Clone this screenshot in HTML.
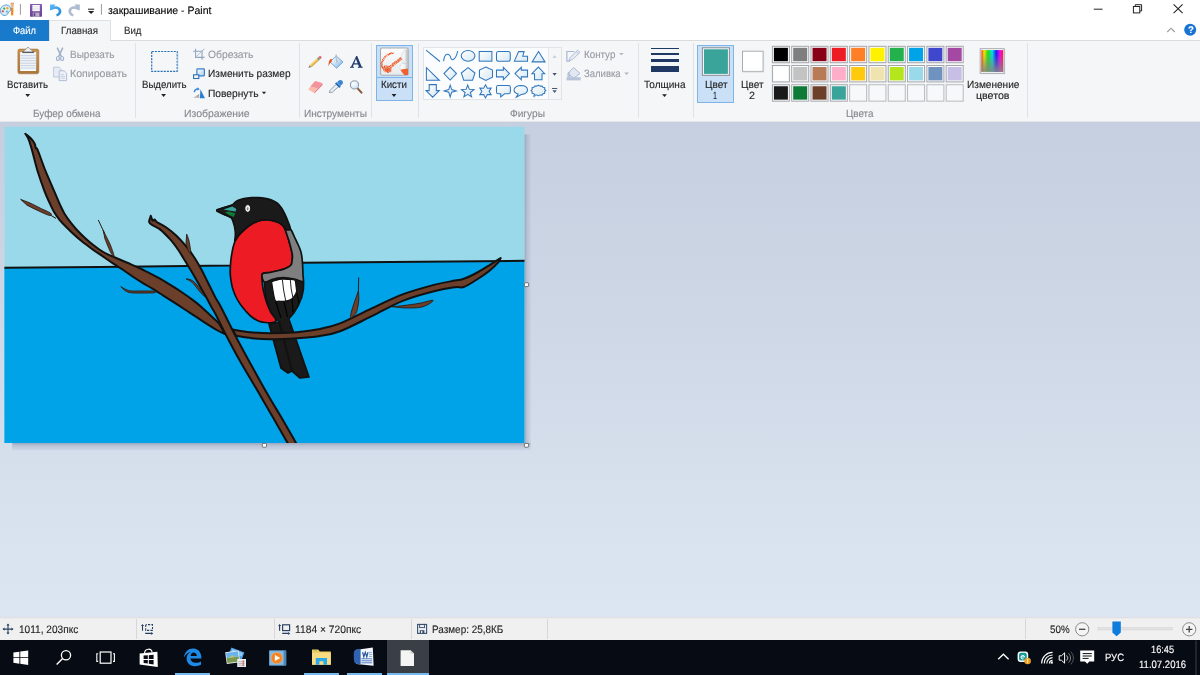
<!DOCTYPE html>
<html><head><meta charset="utf-8"><title>Paint</title>
<style>
html,body{margin:0;padding:0}
body{width:1200px;height:675px;position:relative;overflow:hidden;background:#fff;font-family:"Liberation Sans",sans-serif}
.t{position:absolute;white-space:nowrap;line-height:1;transform-origin:0 0;display:block;text-rendering:geometricPrecision;-webkit-text-stroke:.12px currentColor}
svg{overflow:visible}
</style></head><body>
<div style="position:absolute;left:0px;top:122px;width:1200px;height:496px;background:linear-gradient(#c5cfdf 0%,#ccd6e5 35%,#d7e0ed 75%,#dce5f2 100%)"></div>
<div style="position:absolute;left:0px;top:0px;width:1200px;height:41px;background:#fff"></div>
<div style="position:absolute;left:0px;top:40px;width:1200px;height:82px;background:#f5f6f7;border-top:1px solid #dadbdc;box-sizing:border-box"></div>
<div style="position:absolute;left:0px;top:121px;width:1200px;height:1px;background:#e3e5e8"></div>
<div style="position:absolute;left:0px;top:20px;width:49px;height:21px;background:#1979ca"></div>
<span class="t" style="left:13.00px;top:26px;font-size:10.5px;color:#fff;transform:scaleX(0.8889);">Файл</span>
<div style="position:absolute;left:49px;top:20px;width:62px;height:21px;background:#f5f6f7;border:1px solid #dfe0e2;border-bottom:none;box-sizing:border-box"></div>
<span class="t" style="left:61.00px;top:26px;font-size:10.5px;color:#2b2b2b;transform:scaleX(0.9250);">Главная</span>
<span class="t" style="left:124.00px;top:26px;font-size:10.5px;color:#2b2b2b;transform:scaleX(0.9211);">Вид</span>
<span class="t" style="left:108.00px;top:6px;font-size:10.8px;color:#000;transform:scaleX(0.9740);">закрашивание - Paint</span>
<div style="position:absolute;left:135px;top:43px;width:1px;height:75px;background:#e0e2e5"></div>
<div style="position:absolute;left:299px;top:43px;width:1px;height:75px;background:#e0e2e5"></div>
<div style="position:absolute;left:371px;top:43px;width:1px;height:75px;background:#e0e2e5"></div>
<div style="position:absolute;left:418px;top:43px;width:1px;height:75px;background:#e0e2e5"></div>
<div style="position:absolute;left:638px;top:43px;width:1px;height:75px;background:#e0e2e5"></div>
<div style="position:absolute;left:693px;top:43px;width:1px;height:75px;background:#e0e2e5"></div>
<div style="position:absolute;left:1027px;top:43px;width:1px;height:75px;background:#e0e2e5"></div>
<span class="t" style="left:7.00px;top:80px;font-size:10.5px;color:#1e1e1e;transform:scaleX(0.9213);">Вставить</span>
<span class="t" style="left:70.00px;top:50px;font-size:10.5px;color:#969aa2;transform:scaleX(0.9519);">Вырезать</span>
<span class="t" style="left:70.00px;top:69px;font-size:10.5px;color:#969aa2;transform:scaleX(1.0088);">Копировать</span>
<span class="t" style="left:33.00px;top:109px;font-size:10.5px;color:#85888e;transform:scaleX(0.9457);">Буфер обмена</span>
<span class="t" style="left:142.00px;top:80px;font-size:10.5px;color:#1e1e1e;transform:scaleX(0.9175);">Выделить</span>
<span class="t" style="left:208.00px;top:50px;font-size:10.5px;color:#969aa2;transform:scaleX(0.9811);">Обрезать</span>
<span class="t" style="left:208.00px;top:69px;font-size:10.5px;color:#1e1e1e;transform:scaleX(0.9649);">Изменить размер</span>
<span class="t" style="left:208.00px;top:89px;font-size:10.5px;color:#1e1e1e;transform:scaleX(0.9735);">Повернуть</span>
<span class="t" style="left:183.80px;top:109px;font-size:10.5px;color:#85888e;transform:scaleX(0.9921);">Изображение</span>
<span class="t" style="left:304.00px;top:109px;font-size:10.5px;color:#85888e;transform:scaleX(0.9618);">Инструменты</span>
<div style="position:absolute;left:376px;top:45px;width:37px;height:56px;background:#c9e0f7;border:1px solid #7eb4ea;box-sizing:border-box"></div>
<div style="position:absolute;left:377px;top:76.7px;width:35px;height:1px;background:#7eb4ea"></div>
<span class="t" style="left:380.60px;top:80px;font-size:10.5px;color:#1e1e1e;transform:scaleX(0.9256);">Кисти</span>
<div style="position:absolute;left:423px;top:47px;width:139px;height:53px;background:#fbfcfd;border:1px solid #e1e3e6;box-sizing:border-box"></div>
<div style="position:absolute;left:548px;top:48px;width:13px;height:51px;background:#f5f6f7;border-left:1px solid #e6e8ea;box-sizing:border-box"></div>
<span class="t" style="left:583.70px;top:50px;font-size:10.5px;color:#969aa2;transform:scaleX(0.9309);">Контур</span>
<span class="t" style="left:583.70px;top:69px;font-size:10.5px;color:#969aa2;transform:scaleX(0.9062);">Заливка</span>
<span class="t" style="left:510.00px;top:109px;font-size:10.5px;color:#85888e;transform:scaleX(0.9655);">Фигуры</span>
<span class="t" style="left:644.00px;top:80px;font-size:10.5px;color:#1e1e1e;transform:scaleX(0.9540);">Толщина</span>
<div style="position:absolute;left:651px;top:48.2px;width:28px;height:1px;background:#1f3864"></div>
<div style="position:absolute;left:651px;top:52.5px;width:28px;height:2.1px;background:#1f3864"></div>
<div style="position:absolute;left:651px;top:58.9px;width:28px;height:3.5px;background:#1f3864"></div>
<div style="position:absolute;left:651px;top:65.9px;width:28px;height:5.8px;background:#1f3864"></div>
<div style="position:absolute;left:697px;top:45px;width:37px;height:58px;background:#c9e0f7;border:1px solid #7eb4ea;box-sizing:border-box"></div>
<span class="t" style="left:704.50px;top:80px;font-size:10.5px;color:#1e1e1e;transform:scaleX(0.9574);">Цвет</span>
<span class="t" style="left:713.00px;top:91px;font-size:10.5px;color:#1e1e1e;transform:scaleX(0.6809);">1</span>
<span class="t" style="left:741.00px;top:80px;font-size:10.5px;color:#1e1e1e;transform:scaleX(0.9574);">Цвет</span>
<span class="t" style="left:749.00px;top:91px;font-size:10.5px;color:#1e1e1e;transform:scaleX(1.0213);">2</span>
<svg style="position:absolute;left:0px;top:0px;" width="1200" height="675" viewBox="0 0 1200 675"><rect x="772.40" y="46.30" width="17" height="16.4" fill="#fbfbfc" stroke="#a3a6ab" stroke-width="1"/><rect x="773.90" y="47.80" width="14" height="13.4" fill="#000000"/><rect x="791.71" y="46.30" width="17" height="16.4" fill="#fbfbfc" stroke="#a3a6ab" stroke-width="1"/><rect x="793.21" y="47.80" width="14" height="13.4" fill="#7f7f7f"/><rect x="811.02" y="46.30" width="17" height="16.4" fill="#fbfbfc" stroke="#a3a6ab" stroke-width="1"/><rect x="812.52" y="47.80" width="14" height="13.4" fill="#880015"/><rect x="830.33" y="46.30" width="17" height="16.4" fill="#fbfbfc" stroke="#a3a6ab" stroke-width="1"/><rect x="831.83" y="47.80" width="14" height="13.4" fill="#ed1c24"/><rect x="849.64" y="46.30" width="17" height="16.4" fill="#fbfbfc" stroke="#a3a6ab" stroke-width="1"/><rect x="851.14" y="47.80" width="14" height="13.4" fill="#ff7f27"/><rect x="868.95" y="46.30" width="17" height="16.4" fill="#fbfbfc" stroke="#a3a6ab" stroke-width="1"/><rect x="870.45" y="47.80" width="14" height="13.4" fill="#fff200"/><rect x="888.26" y="46.30" width="17" height="16.4" fill="#fbfbfc" stroke="#a3a6ab" stroke-width="1"/><rect x="889.76" y="47.80" width="14" height="13.4" fill="#22b14c"/><rect x="907.57" y="46.30" width="17" height="16.4" fill="#fbfbfc" stroke="#a3a6ab" stroke-width="1"/><rect x="909.07" y="47.80" width="14" height="13.4" fill="#00a2e8"/><rect x="926.88" y="46.30" width="17" height="16.4" fill="#fbfbfc" stroke="#a3a6ab" stroke-width="1"/><rect x="928.38" y="47.80" width="14" height="13.4" fill="#3f48cc"/><rect x="946.19" y="46.30" width="17" height="16.4" fill="#fbfbfc" stroke="#a3a6ab" stroke-width="1"/><rect x="947.69" y="47.80" width="14" height="13.4" fill="#a349a4"/><rect x="772.40" y="65.50" width="17" height="16.4" fill="#fbfbfc" stroke="#a3a6ab" stroke-width="1"/><rect x="773.90" y="67.00" width="14" height="13.4" fill="#ffffff"/><rect x="791.71" y="65.50" width="17" height="16.4" fill="#fbfbfc" stroke="#a3a6ab" stroke-width="1"/><rect x="793.21" y="67.00" width="14" height="13.4" fill="#c3c3c3"/><rect x="811.02" y="65.50" width="17" height="16.4" fill="#fbfbfc" stroke="#a3a6ab" stroke-width="1"/><rect x="812.52" y="67.00" width="14" height="13.4" fill="#b97a57"/><rect x="830.33" y="65.50" width="17" height="16.4" fill="#fbfbfc" stroke="#a3a6ab" stroke-width="1"/><rect x="831.83" y="67.00" width="14" height="13.4" fill="#ffaec9"/><rect x="849.64" y="65.50" width="17" height="16.4" fill="#fbfbfc" stroke="#a3a6ab" stroke-width="1"/><rect x="851.14" y="67.00" width="14" height="13.4" fill="#ffc90e"/><rect x="868.95" y="65.50" width="17" height="16.4" fill="#fbfbfc" stroke="#a3a6ab" stroke-width="1"/><rect x="870.45" y="67.00" width="14" height="13.4" fill="#efe4b0"/><rect x="888.26" y="65.50" width="17" height="16.4" fill="#fbfbfc" stroke="#a3a6ab" stroke-width="1"/><rect x="889.76" y="67.00" width="14" height="13.4" fill="#b5e61d"/><rect x="907.57" y="65.50" width="17" height="16.4" fill="#fbfbfc" stroke="#a3a6ab" stroke-width="1"/><rect x="909.07" y="67.00" width="14" height="13.4" fill="#99d9ea"/><rect x="926.88" y="65.50" width="17" height="16.4" fill="#fbfbfc" stroke="#a3a6ab" stroke-width="1"/><rect x="928.38" y="67.00" width="14" height="13.4" fill="#7092be"/><rect x="946.19" y="65.50" width="17" height="16.4" fill="#fbfbfc" stroke="#a3a6ab" stroke-width="1"/><rect x="947.69" y="67.00" width="14" height="13.4" fill="#c8bfe7"/><rect x="772.40" y="84.75" width="17" height="16.4" fill="#fbfbfc" stroke="#a3a6ab" stroke-width="1"/><rect x="773.90" y="86.25" width="14" height="13.4" fill="#1a1a1a"/><rect x="791.71" y="84.75" width="17" height="16.4" fill="#fbfbfc" stroke="#a3a6ab" stroke-width="1"/><rect x="793.21" y="86.25" width="14" height="13.4" fill="#0f7a37"/><rect x="811.02" y="84.75" width="17" height="16.4" fill="#fbfbfc" stroke="#a3a6ab" stroke-width="1"/><rect x="812.52" y="86.25" width="14" height="13.4" fill="#6b3f2a"/><rect x="830.33" y="84.75" width="17" height="16.4" fill="#fbfbfc" stroke="#a3a6ab" stroke-width="1"/><rect x="831.83" y="86.25" width="14" height="13.4" fill="#3ba49a"/><rect x="849.64" y="84.75" width="17" height="16.4" fill="#f7f8f9" stroke="#b7babe" stroke-width="1"/><rect x="868.95" y="84.75" width="17" height="16.4" fill="#f7f8f9" stroke="#b7babe" stroke-width="1"/><rect x="888.26" y="84.75" width="17" height="16.4" fill="#f7f8f9" stroke="#b7babe" stroke-width="1"/><rect x="907.57" y="84.75" width="17" height="16.4" fill="#f7f8f9" stroke="#b7babe" stroke-width="1"/><rect x="926.88" y="84.75" width="17" height="16.4" fill="#f7f8f9" stroke="#b7babe" stroke-width="1"/><rect x="946.19" y="84.75" width="17" height="16.4" fill="#f7f8f9" stroke="#b7babe" stroke-width="1"/><rect x="702.4" y="47.75" width="27" height="27.6" fill="#eef4fb" stroke="#8c8f94" stroke-width="1"/><rect x="704" y="49.3" width="23.9" height="24.6" fill="#3ba49a"/><rect x="742.5" y="51.2" width="20.6" height="20.2" fill="#fff" stroke="#a9acb1" stroke-width="1"/><path d="M763.6,51.6 V71.9 H742.8" fill="none" stroke="#c3c6ca" stroke-width=".8"/></svg>
<svg style="position:absolute;left:0px;top:0px;" width="1200" height="675" viewBox="0 0 1200 675"><defs><linearGradient id="gHue" x1="0" y1="0" x2="1" y2="0"><stop offset="0" stop-color="#ff2a00"/><stop offset=".12" stop-color="#ffe600"/><stop offset=".3" stop-color="#18e018"/><stop offset=".5" stop-color="#00e0e0"/><stop offset=".68" stop-color="#1414ff"/><stop offset=".86" stop-color="#ff00e6"/><stop offset="1" stop-color="#ff1440"/></linearGradient><linearGradient id="gGray" x1="0" y1="0" x2="0" y2="1"><stop offset="0" stop-color="#808080" stop-opacity="0"/><stop offset=".25" stop-color="#808080" stop-opacity=".12"/><stop offset="1" stop-color="#858585" stop-opacity=".92"/></linearGradient></defs><rect x="980.6" y="49.2" width="24.6" height="25" fill="#9a9da2" opacity=".35"/><rect x="980.2" y="48.7" width="24" height="24.6" fill="#fdfdfd" stroke="#a6a9ae" stroke-width="1"/><rect x="981.4" y="50.1" width="21.8" height="21.7" fill="url(#gHue)"/><rect x="981.4" y="50.1" width="21.8" height="21.7" fill="url(#gGray)"/></svg>
<span class="t" style="left:967.00px;top:80px;font-size:10.5px;color:#1e1e1e;transform:scaleX(0.9611);">Изменение</span>
<span class="t" style="left:976.00px;top:91px;font-size:10.5px;color:#1e1e1e;transform:scaleX(1.0113);">цветов</span>
<span class="t" style="left:846.00px;top:109px;font-size:10.5px;color:#85888e;transform:scaleX(0.9402);">Цвета</span>
<svg style="position:absolute;left:0px;top:0px;" width="1200" height="675" viewBox="0 0 1200 675"><defs>
<linearGradient id="gBoard" x1="0" y1="0" x2="0" y2="1"><stop offset="0" stop-color="#c8924f"/><stop offset="1" stop-color="#a9763b"/></linearGradient>
<linearGradient id="gUndo" x1="0" y1="0" x2="1" y2="1"><stop offset="0" stop-color="#5db8f5"/><stop offset="1" stop-color="#1e86d8"/></linearGradient>
<linearGradient id="gShape" x1="0" y1="0" x2="1" y2="1"><stop offset="0" stop-color="#ffffff"/><stop offset="1" stop-color="#d6e8f3"/></linearGradient>
<linearGradient id="gRes" x1="0" y1="0" x2="1" y2="1"><stop offset="0" stop-color="#ffffff"/><stop offset="1" stop-color="#a9cdea"/></linearGradient>
<linearGradient id="gSave" x1="0" y1="0" x2="0" y2="1"><stop offset="0" stop-color="#8a5cb4"/><stop offset="1" stop-color="#6a3f95"/></linearGradient>
</defs><path d="M0.3,10.5 C0.3,7 3.5,5 6.5,5 C9.5,5 10.8,7.2 10.6,9.6 C10.4,12 8.6,11.6 8.2,13 C7.8,14.6 6,15.6 4,15.4 C1.6,15.1 0.3,13 0.3,10.5Z" fill="#d9ecf8" stroke="#5b9fd0" stroke-width="1"/><circle cx="4.2" cy="8.6" r="1.15" fill="#3bb24a"/><circle cx="7.4" cy="8.2" r="1.15" fill="#f4a01c"/><circle cx="2.8" cy="11.3" r="1.1" fill="#e04848"/><circle cx="7" cy="11.6" r="1.2" fill="#7db4e0"/><path d="M11,7.6 L13.4,7.6 L13.3,15.3 L11.9,15.6 L11.1,15.3Z" fill="#f08a1c"/><path d="M10.4,3.2 L14,3.2 L13.5,7.6 L11,7.6Z" fill="#e7b98a"/><rect x="10.8" y="2.6" width="3" height="1.2" fill="#c9a27a"/><rect x="19.9" y="4" width="1" height="10.8" fill="#9a9a9a"/><rect x="100.9" y="4" width="1" height="10.8" fill="#9a9a9a"/><rect x="30" y="4" width="12" height="12.7" rx="0.6" fill="url(#gSave)"/><rect x="32.4" y="5" width="7.4" height="6.2" fill="#fff"/><path d="M32.4,6.7h7.4M32.4,8.3h7.4M32.4,9.8h7.4" stroke="#c9c9d6" stroke-width=".5"/><rect x="32.8" y="12.6" width="6.6" height="4.1" fill="#b9b3c4"/><rect x="33.6" y="13.2" width="1.8" height="2.9" fill="#6a3f95"/><path d="M50,4.6 L55.6,4.6 L53.6,6.6 C57.6,5.4 61.6,8 61.4,11.6 C61.2,14.2 59.2,16 57,16.6 L56,14.4 C57.8,13.8 58.9,12.4 58.6,10.8 C58.2,8.8 56,8 53.7,9.2 L50,10.4Z" fill="url(#gUndo)"/><path d="M79.8,4.6 L74.2,4.6 L76.2,6.6 C72.2,5.4 68.2,8 68.4,11.6 C68.6,14.2 70.6,16 72.8,16.6 L73.8,14.4 C72,13.8 70.9,12.4 71.2,10.8 C71.6,8.8 73.8,8 76.1,9.2 L79.8,10.4Z" fill="#aebcd3"/><rect x="88" y="8.7" width="6.2" height="1" fill="#222"/><path d="M88,11 L94.2,11 L91.1,14Z" fill="#222"/><path d="M1093.8,9.2 H1102.6" stroke="#222" stroke-width="1"/><rect x="1133.4" y="6.5" width="6.4" height="6.4" fill="none" stroke="#222" stroke-width="1"/><path d="M1135.3,6.4 V4.7 H1141.6 V11 H1139.9" fill="none" stroke="#222" stroke-width="1"/><path d="M1173.6,4.4 L1182.6,13.2 M1182.6,4.4 L1173.6,13.2" stroke="#222" stroke-width="1.05"/><path d="M1167.3,32 L1171,28.2 L1174.8,32" fill="none" stroke="#9a9a9a" stroke-width="1.1"/><circle cx="1190.2" cy="29.8" r="6" fill="#1873d3"/><rect x="17.9" y="49.1" width="20.9" height="24.7" rx="1.8" fill="url(#gBoard)" stroke="#a27238" stroke-width=".6"/><rect x="20.2" y="52.1" width="15.9" height="18.9" fill="#fbfcfd"/><rect x="20.2" y="53.6" width="15.9" height="15.8" fill="#e6ecf2"/><path d="M20.2,55.6h15.9 M20.2,58.2h15.9 M20.2,60.7h15.9 M20.2,63.2h15.9 M20.2,65.7h15.9 M20.2,68.1h15.9" stroke="#c6d2de" stroke-width=".9"/><path d="M20.2,54.4h15.9 M20.2,56.9h15.9 M20.2,59.5h15.9 M20.2,62h15.9 M20.2,64.5h15.9 M20.2,66.9h15.9 M20.2,69.2h15.9" stroke="#f4f7fa" stroke-width=".7"/><path d="M22.6,52.6 L26.4,48.6 C27.2,47 29,47 29.8,48.6 L33.8,52.6Z" fill="#e9ebee" stroke="#70747a" stroke-width=".6"/><path d="M24.4,51.2 L31.8,51.2" stroke="#fff" stroke-width="1"/><rect x="22.4" y="51.6" width="11.6" height="1.4" fill="#5a5d62"/><path d="M25.3,94.1 L30.099999999999998,94.1 L27.7,96.89999999999999Z" fill="#222"/><path d="M57.2,47.6 L61.4,56.6 M62.8,47.6 L58.6,56.6" stroke="#9fb0cd" stroke-width="1.5" fill="none"/><ellipse cx="57.9" cy="58.5" rx="1.5" ry="2" fill="none" stroke="#9fb0cd" stroke-width="1.2"/><ellipse cx="62.1" cy="58.5" rx="1.5" ry="2" fill="none" stroke="#9fb0cd" stroke-width="1.2"/><path d="M53.6,67.2 h5.4 l2.2,2.2 v7.6 h-7.6Z" fill="#e8edf5" stroke="#b7c4da" stroke-width=".9"/><path d="M59.2,70.8 h5 l2.4,2.4 v7.4 h-7.4Z" fill="#eef2f8" stroke="#a9b9d3" stroke-width=".9"/><path d="M60.6,74.6h3.6M60.6,76.4h4.4M60.6,78.2h4.4" stroke="#b7c4da" stroke-width=".7"/><rect x="151.7" y="51.5" width="25.5" height="19.8" fill="none" stroke="#2a72b8" stroke-width="1.2" stroke-dasharray="2.1 1.05"/><path d="M177.9,52 V71.6" stroke="#a9c6e4" stroke-width=".6"/><path d="M161.2,94.1 L166.0,94.1 L163.6,96.89999999999999Z" fill="#222"/><path d="M195.6,48.8 V57.4 H204.6 M193.2,51.2 H202 V59.8" fill="none" stroke="#93a3c2" stroke-width="1.1"/><path d="M196.6,56.4 L201,52.2" stroke="#b3c0d6" stroke-width="1"/><path d="M202,51.2 L204.4,48.8" stroke="#93a3c2" stroke-width="1"/><rect x="196.9" y="68.9" width="7.5" height="6.9" rx=".7" fill="url(#gRes)" stroke="#3a80c6" stroke-width="1.2"/><rect x="193.6" y="74.8" width="5.2" height="3.7" fill="#f8fafc" stroke="#2b6fb8" stroke-width="1.1"/><defs><linearGradient id="gRotG" x1="0" y1="1" x2="1" y2="0"><stop offset="0" stop-color="#d9dadc"/><stop offset="1" stop-color="#8d9095"/></linearGradient></defs><path d="M192.8,98.1 L199.2,98.1 L199.2,93.9Z" fill="url(#gRotG)"/><path d="M199.9,98.2 L205,98.2 L200.4,89.2Z" fill="#2b7fd0"/><path d="M194.2,92.2 C194.6,90 196.2,88.8 198,88.9" fill="none" stroke="#2f86e0" stroke-width="1.4"/><path d="M197.4,87.3 L199.8,89.3 L197.2,90.6Z" fill="#2f86e0"/><path d="M261.9,91.8 L266.1,91.8 L264,94.2Z" fill="#222"/></svg>
<span class="t" style="left:1187.60px;top:26px;font-size:9.5px;color:#fff;transform:scaleX(1.0095);font-weight:bold">?</span>
<svg style="position:absolute;left:0px;top:0px;" width="1200" height="675" viewBox="0 0 1200 675"><defs>
<linearGradient id="gBucket" x1="0" y1="0" x2="1" y2="1"><stop offset="0" stop-color="#ffffff"/><stop offset=".45" stop-color="#d4e6f7"/><stop offset="1" stop-color="#6fa8e0"/></linearGradient>
<linearGradient id="gEr" x1="0" y1="0" x2="0" y2="1"><stop offset="0" stop-color="#f7a3a3"/><stop offset="1" stop-color="#ee8080"/></linearGradient>
<linearGradient id="gBrBox" x1="0" y1="0" x2="0" y2="1"><stop offset="0" stop-color="#fdfdfd"/><stop offset="1" stop-color="#e6ebee"/></linearGradient>
<radialGradient id="gLens" cx=".4" cy=".35" r=".7"><stop offset="0" stop-color="#ffffff"/><stop offset="1" stop-color="#c3def5"/></radialGradient>
</defs><g transform="translate(308.4,68.1) rotate(-42.4)"><path d="M0,0 L3,-1.4 L3,1.4Z" fill="#8a8378"/><rect x="3" y="-1.4" width="10" height="2.8" fill="#ecc05a"/><rect x="3" y="-1.4" width="10" height="0.9" fill="#f6dc92"/><rect x="3" y=".6" width="10" height=".8" fill="#d1a040"/><rect x="13" y="-1.4" width="1.3" height="2.8" fill="#4f9a66"/><rect x="14.3" y="-1.4" width="2.9" height="2.8" rx=".7" fill="#de6f7c"/></g><path d="M336.2,56 L343,62 L336.6,68.2 L330,62Z" fill="url(#gBucket)" stroke="#6aa3dc" stroke-width=".9"/><path d="M336.2,54.6 L336.8,62.4" stroke="#9aa3ad" stroke-width="1.3"/><path d="M336.2,54.6 L336.8,62.4" stroke="#e4e8ec" stroke-width=".5"/><path d="M331.8,58.8 C329.6,59 328.4,61.4 328.6,66.2 C329.4,64.6 330.2,62.6 331.8,61.6Z" fill="#f0501e"/><path d="M356.2,56 L357.2,56 L361.6,66.4 L362.8,67 L362.8,67.8 L357.8,67.8 L357.8,67 L358.9,66.6 L358.1,64.5 L353.7,64.5 L352.9,66.6 L354,67 L354,67.8 L350,67.8 L350,67 L351.2,66.4Z M354.3,63.2 L357.6,63.2 L355.9,58.8Z" fill="#1f3b6b" fill-rule="evenodd"/><path d="M315.2,81.1 L322.3,82.9 L317.6,88.4 L310.2,86.5Z" fill="#f4939b"/><path d="M310.2,86.5 L317.6,88.4 L313.9,92.7 L308.4,89.8Z" fill="#fbbcae"/><path d="M322.3,82.9 L322.6,85.1 L314.9,92.9 L313.9,92.7 L317.6,88.4Z" fill="#e9808a"/><path d="M329.4,92.6 L330,90.4 L336.2,84.2 L338.6,86.6 L332.4,92.2Z" fill="#e8eef4" stroke="#6d7d90" stroke-width=".7"/><path d="M335,83.6 L339.4,88 L340.8,86.6 L336.4,82.2Z" fill="#2468b4"/><path d="M337.2,82.6 C338,80.4 340.6,79.2 342.2,80.8 C343.8,82.4 342.6,85 340.4,85.8Z" fill="#3a86d6"/><path d="M357.8,88.6 L361.5,92.7" stroke="#8a5a3a" stroke-width="2" stroke-linecap="round"/><circle cx="354.5" cy="84.9" r="4.1" fill="url(#gLens)" stroke="#8c97a4" stroke-width="1"/><defs><filter id="grain" x="-10%" y="-10%" width="120%" height="120%"><feTurbulence type="fractalNoise" baseFrequency="1.1" numOctaves="2" seed="7" result="n"/><feColorMatrix in="n" type="matrix" values="0 0 0 0 0  0 0 0 0 0  0 0 0 0 0  3.2 0 0 0 -1.05" result="m"/><feComposite in="SourceGraphic" in2="m" operator="in"/></filter><linearGradient id="gBody" x1="0" y1="0" x2="1" y2="0"><stop offset="0" stop-color="#ffffff"/><stop offset=".55" stop-color="#f2f3f4"/><stop offset="1" stop-color="#b4b8bd"/></linearGradient></defs><rect x="380.5" y="48" width="27.8" height="27.3" rx="1.8" fill="url(#gBrBox)" stroke="#a9adb2" stroke-width="1.1"/><g opacity=".38"><path d="M392.8,53 C388.6,53.8 384.2,56.8 382.4,61 C381.2,63.6 381.4,66 382.6,67.8" fill="none" stroke="#f08050" stroke-width="1.2" stroke-linecap="round"/><ellipse cx="387.2" cy="69" rx="4.4" ry="3.3" fill="#f07040" transform="rotate(25 387.2 69)"/><path d="M388.6,68.6 C392,65.4 396,62 400.8,58.8" fill="none" stroke="#f07040" stroke-width="2.4" stroke-linecap="round"/></g><g filter="url(#grain)"><path d="M392.8,53 C388.6,53.8 384.2,56.8 382.4,61 C381.2,63.6 381.4,66 382.6,67.8" fill="none" stroke="#ee5a28" stroke-width="2" stroke-linecap="round"/><ellipse cx="387.2" cy="69" rx="4.8" ry="3.7" fill="#ee5424" transform="rotate(25 387.2 69)"/><path d="M388.6,68.6 C392,65.4 396,62 400.8,58.8" fill="none" stroke="#ee5a28" stroke-width="3" stroke-linecap="round"/></g><ellipse cx="387.6" cy="69.4" rx="2.6" ry="2" fill="#ee5a28" opacity=".75"/><path d="M402.2,53.2 C402.6,50.8 405.4,49.4 408,49.6 L408,74.9 L404,74.9 C402.6,73 400.4,70.6 400,68.4 C399.6,66.2 400.8,64.6 402.4,63.4 C403.6,62.4 403.4,60.6 402.4,59.4 C401.2,57.8 401.6,55.2 402.2,53.2Z" fill="url(#gBody)" stroke="#c2c6ca" stroke-width=".5"/><path d="M402.6,63.4 C404.4,63 406,63.4 408,64.6" fill="none" stroke="#c9cdd1" stroke-width=".8"/><path d="M400.6,69.8 C403.6,69 406,68.8 408,68.8 L408,74.9 L404.2,74.9 C402.8,73.2 401.2,71.6 400.6,69.8Z" fill="#f0602e"/><path d="M391.6,94.1 L396.4,94.1 L394,96.89999999999999Z" fill="#222"/><path d="M426.04,50.04 L439.94,61.52" fill="none" stroke="#3077bd" stroke-width="1.05" stroke-linejoin="miter"/><path d="M443.56,61.16 C444.77,51.25 449.60,53.67 450.81,57.90 S456.25,58.50 457.70,51.01" fill="none" stroke="#3077bd" stroke-width="1.05"/><ellipse cx="468.09" cy="55.84" rx="6.89" ry="5.32" fill="url(#gShape)" stroke="#3077bd" stroke-width="1.05"/><rect x="479.21" y="51.49" width="12.69" height="9.67" fill="url(#gShape)" stroke="#3077bd" stroke-width="1.05"/><rect x="496.49" y="51.49" width="13.77" height="9.67" rx="2" fill="url(#gShape)" stroke="#3077bd" stroke-width="1.05"/><path d="M514.37,61.16 L518.60,51.61 L524.16,51.61 L522.71,56.20 L527.54,56.20 L527.54,61.16Z" fill="url(#gShape)" stroke="#3077bd" stroke-width="1.05" stroke-linejoin="miter"/><path d="M538.54,51.49 L545.06,61.88 L532.13,61.88Z" fill="url(#gShape)" stroke="#3077bd" stroke-width="1.05" stroke-linejoin="miter"/><path d="M426.40,67.68 L426.40,80.25 L439.33,80.25Z" fill="url(#gShape)" stroke="#3077bd" stroke-width="1.05" stroke-linejoin="miter"/><path d="M450.21,67.08 L456.49,73.60 L450.21,80.01 L443.92,73.60Z" fill="url(#gShape)" stroke="#3077bd" stroke-width="1.05" stroke-linejoin="miter"/><path d="M468.09,67.68 L474.98,73.00 L472.56,80.25 L463.74,80.25 L461.32,73.00Z" fill="url(#gShape)" stroke="#3077bd" stroke-width="1.05" stroke-linejoin="miter"/><path d="M485.85,67.08 L492.50,70.10 L492.50,77.23 L485.85,80.49 L479.45,77.23 L479.45,70.10Z" fill="url(#gShape)" stroke="#3077bd" stroke-width="1.05" stroke-linejoin="miter"/><path d="M496.49,70.10 L503.37,70.10 L503.37,67.32 L509.42,73.60 L503.37,79.77 L503.37,76.87 L496.49,76.87Z" fill="url(#gShape)" stroke="#3077bd" stroke-width="1.05" stroke-linejoin="miter"/><path d="M527.54,70.10 L521.26,70.10 L521.26,67.32 L514.97,73.60 L521.26,79.77 L521.26,76.87 L527.54,76.87Z" fill="url(#gShape)" stroke="#3077bd" stroke-width="1.05" stroke-linejoin="miter"/><path d="M538.41,67.08 L544.70,73.72 L542.04,73.72 L542.04,79.65 L534.55,79.65 L534.55,73.72 L531.89,73.72Z" fill="url(#gShape)" stroke="#3077bd" stroke-width="1.05" stroke-linejoin="miter"/><path d="M429.18,84.60 L436.31,84.60 L436.31,90.64 L439.33,90.64 L432.69,97.17 L426.04,90.64 L429.18,90.64Z" fill="url(#gShape)" stroke="#3077bd" stroke-width="1.05" stroke-linejoin="miter"/><path d="M450.21,85.08 L451.66,89.55 L456.25,90.88 L451.66,92.21 L450.21,96.92 L448.76,92.21 L444.17,90.88 L448.76,89.55Z" fill="url(#gShape)" stroke="#3077bd" stroke-width="1.05" stroke-linejoin="miter"/><path d="M467.73,85.08 L469.36,89.36 L473.93,89.59 L470.37,92.47 L471.56,96.89 L467.73,94.39 L463.89,96.89 L465.09,92.47 L461.52,89.59 L466.09,89.36Z" fill="url(#gShape)" stroke="#3077bd" stroke-width="1.05" stroke-linejoin="miter"/><path d="M485.49,84.84 L487.30,88.23 L491.14,88.10 L489.12,91.37 L491.14,94.63 L487.30,94.51 L485.49,97.89 L483.68,94.51 L479.84,94.63 L481.87,91.37 L479.84,88.10 L483.68,88.23Z" fill="url(#gShape)" stroke="#3077bd" stroke-width="1.05" stroke-linejoin="miter"/><path d="M498.30,85.45 H508.45 Q510.38,85.45 510.38,87.26 V91.97 Q510.38,93.78 508.45,93.78 H504.58 L500.72,96.92 L500.72,93.78 H498.30 Q496.49,93.78 496.49,91.97 V87.26 Q496.49,85.45 498.30,85.45Z" fill="url(#gShape)" stroke="#3077bd" stroke-width="1.05"/><path d="M518.12,94.02 C511.83,92.33 513.04,85.69 520.89,85.45 C529.35,85.45 529.96,94.14 521.26,94.51 L516.30,97.17Z" fill="url(#gShape)" stroke="#3077bd" stroke-width="1.05"/><path d="M545.86,90.52 L544.56,91.70 L544.86,93.18 L542.91,93.73 L542.14,95.12 L540.06,94.91 L538.41,95.84 L536.77,94.91 L534.69,95.12 L533.92,93.73 L531.97,93.18 L532.27,91.70 L530.97,90.52 L532.27,89.34 L531.97,87.86 L533.92,87.31 L534.69,85.92 L536.77,86.13 L538.41,85.20 L540.06,86.13 L542.14,85.92 L542.91,87.31 L544.86,87.86 L544.56,89.34 L545.86,90.52Z" fill="url(#gShape)" stroke="#3077bd" stroke-width="1.05" stroke-linejoin="round"/><circle cx="534.19" cy="96.20" r=".8" fill="none" stroke="#3077bd" stroke-width=".7"/><path d="M552.43,57.77 L556.78,57.77 L554.61,55.36Z" fill="#c5cad3"/><path d="M552.43,73.00 L556.78,73.00 L554.61,75.66Z" fill="#4a5670"/><rect x="551.95" y="87.98" width="5.32" height="1" fill="#4a5670"/><path d="M552.43,90.28 L556.78,90.28 L554.61,92.94Z" fill="#4a5670"/><path d="M574.4,51.5 H566.9 V61.2 H570" fill="none" stroke="#a9b8d2" stroke-width="1.2"/><path d="M568.9,60.6 L570.2,57.4 L577.6,50.2 L580,52.4 L572.4,59.6Z" fill="#e6ebf4" stroke="#a9b8d2" stroke-width=".9"/><path d="M576.2,51.6 L578.6,53.8" stroke="#a9b8d2" stroke-width=".8"/><path d="M573.6,67.6 L580,73.4 L574,78 L567.6,73.6Z" fill="#e3e9f2" stroke="#a9b8d2" stroke-width="1"/><rect x="566.6" y="77.2" width="14" height="3.2" fill="#b6c3d9"/><path d="M567.4,77.2 C567,74.6 568.2,72.4 569.8,71.6 L570.6,77.2Z" fill="#b6c3d9"/><path d="M619.1,52.9 L623.6999999999999,52.9 L621.4,55.3Z" fill="#b0b3b9"/><path d="M624.3000000000001,72.5 L628.9,72.5 L626.6,74.9Z" fill="#b0b3b9"/><path d="M662.1,94.3 L666.9,94.3 L664.5,97.1Z" fill="#222"/></svg>
<svg style="position:absolute;left:0px;top:0px;" width="1200" height="675" viewBox="0 0 1200 675"><defs><linearGradient id="shR" x1="0" y1="0" x2="1" y2="0"><stop offset="0" stop-color="#95a0b8" stop-opacity=".9"/><stop offset=".5" stop-color="#a8b2c8" stop-opacity=".5"/><stop offset="1" stop-color="#b4bed2" stop-opacity=".3"/></linearGradient><linearGradient id="shB" x1="0" y1="0" x2="0" y2="1"><stop offset="0" stop-color="#95a0b8" stop-opacity=".9"/><stop offset=".5" stop-color="#a8b2c8" stop-opacity=".5"/><stop offset="1" stop-color="#b4bed2" stop-opacity=".3"/></linearGradient></defs><rect x="524.5" y="134.29999999999998" width="6.2" height="308.59999999999997" fill="url(#shR)"/><rect x="12.2" y="442.9" width="512.3000000000001" height="7.2" fill="url(#shB)"/><defs><radialGradient id="shC" cx="0" cy="0" r="1"><stop offset="0" stop-color="#95a0b8" stop-opacity=".9"/><stop offset=".5" stop-color="#a8b2c8" stop-opacity=".5"/><stop offset="1" stop-color="#b4bed2" stop-opacity=".3"/></radialGradient></defs><rect x="524.5" y="442.9" width="6.2" height="7.2" fill="url(#shB)" opacity=".8"/><defs><filter id="bl" x="-5%" y="-5%" width="110%" height="110%"><feGaussianBlur stdDeviation="2.2"/></filter><clipPath id="cv"><rect x="4.4" y="126.6" width="520.1" height="316.29999999999995"/></clipPath></defs><g clip-path="url(#cv)"><rect x="4.4" y="126.6" width="520.1" height="316.29999999999995" fill="#99d9ea"/><path d="M0,267.8 L100,266.9 L231,265.4 L262,264.2 L302,262.8 L420,261.7 L530,260.8 L530,450 L0,450Z" fill="#00a2e8" stroke="#111" stroke-width="2"/><path d="M25.3,133.7 C25.9,134.7 27.5,136.7 28.7,139.7 C29.9,142.7 30.9,146.4 32.4,151.7 C33.9,157.0 35.8,165.3 37.8,171.7 C39.8,178.1 42.3,185.2 44.2,190.3 C46.1,195.4 47.5,198.3 49.2,202.0 C50.9,205.7 52.6,209.5 54.4,212.6 C56.2,215.7 58.0,217.9 60.0,220.4 C62.0,222.9 63.9,224.7 66.7,227.5 C69.5,230.3 73.7,234.3 76.7,237.0 C79.8,239.7 82.2,241.5 85.0,243.7 C87.8,245.9 90.2,247.8 93.3,250.0 C96.3,252.2 100.0,254.4 103.3,256.7 C106.6,259.0 110.0,261.5 113.3,263.7 C116.6,265.9 120.0,267.8 123.3,270.0 C126.6,272.2 130.0,274.8 133.3,277.0 C136.6,279.2 140.0,281.3 143.3,283.3 C146.6,285.3 150.0,287.1 153.3,289.2 C156.6,291.2 159.4,293.1 163.3,295.6 C167.2,298.1 172.2,301.3 176.7,304.2 C181.1,307.1 185.6,309.9 190.0,312.8 C194.4,315.7 198.9,318.7 203.3,321.6 C207.8,324.5 213.1,327.9 216.7,330.0 C220.3,332.1 223.4,333.3 224.7,334.0 L224.7,334.0 C223.8,332.3 221.1,326.6 219.3,324.0 C217.5,321.4 216.7,321.2 214.0,318.7 C211.3,316.1 206.8,311.8 203.3,308.7 C199.9,305.6 197.2,303.3 193.3,300.4 C189.4,297.4 183.9,293.6 180.0,291.0 C176.1,288.4 173.3,286.8 170.0,284.7 C166.7,282.6 163.9,280.8 160.0,278.6 C156.1,276.4 150.3,273.6 146.7,271.7 C143.1,269.8 141.6,269.0 138.3,267.5 C135.0,266.0 130.6,264.2 126.7,262.5 C122.8,260.8 118.9,259.2 115.0,257.5 C111.1,255.8 106.9,254.1 103.3,252.0 C99.7,249.9 96.3,247.3 93.3,245.0 C90.2,242.7 87.8,240.6 85.0,238.0 C82.2,235.4 79.2,232.4 76.7,229.7 C74.2,227.0 72.0,224.2 70.0,221.7 C68.0,219.2 66.7,217.4 65.0,214.6 C63.3,211.8 61.6,208.0 60.0,204.6 C58.4,201.2 58.0,199.8 55.6,194.3 C53.2,188.8 48.8,179.0 45.8,171.7 C42.8,164.4 39.5,154.2 37.8,150.3 C36.1,146.4 36.3,149.1 35.8,148.0 C35.3,146.9 35.5,145.1 34.6,143.5 C33.8,141.9 32.2,139.9 30.7,138.3 C29.1,136.7 26.2,134.5 25.3,133.7Z" fill="#6b3f2a" stroke="#111" stroke-width="2" stroke-linejoin="round"/><path d="M279.0,321.0 L292.0,371.0 L300.0,378.0 L309.0,377.0 L288.5,318.0Z" fill="#1a1a1a" stroke="#111" stroke-width="1.7" stroke-linejoin="round"/><path d="M269.0,324.0 L281.0,368.0 L288.0,373.0 L292.0,371.0 L279.0,322.0Z" fill="#1a1a1a" stroke="#111" stroke-width="1.7" stroke-linejoin="round"/><path d="M232.5,329.6 C235.4,330.0 243.8,331.6 250.0,332.2 C256.2,332.8 262.2,333.3 270.0,333.3 C277.8,333.3 288.7,332.9 297.0,332.2 C305.3,331.5 312.8,330.5 320.0,329.0 C327.2,327.5 331.4,326.8 340.0,323.4 C348.6,319.9 361.1,313.2 371.7,308.3 C382.2,303.4 392.8,298.1 403.3,294.1 C413.9,290.2 426.4,286.9 435.0,284.6 C443.6,282.4 450.4,281.5 455.0,280.6 C459.6,279.7 459.2,280.3 462.5,279.2 C465.8,278.1 470.0,276.4 474.6,274.0 C479.2,271.6 486.0,267.3 490.4,264.6 C494.8,261.9 499.0,259.1 500.7,258.0 L500.7,258.0 C500.2,258.8 499.8,260.6 497.8,262.8 C495.8,265.0 492.4,268.4 488.8,271.3 C485.2,274.2 480.4,277.4 476.2,280.0 C472.0,282.6 467.3,285.8 463.8,287.0 C460.3,288.2 459.8,286.5 455.0,287.2 C450.2,287.9 443.6,288.8 435.0,291.0 C426.4,293.2 413.9,296.4 403.3,300.6 C392.8,304.8 382.2,311.1 371.7,316.2 C361.1,321.3 348.6,328.0 340.0,331.3 C331.4,334.6 327.2,334.9 320.0,336.0 C312.8,337.1 305.3,337.7 297.0,338.2 C288.7,338.7 277.5,339.2 270.0,339.2 C262.5,339.2 257.7,338.8 252.0,338.2 C246.3,337.6 238.7,336.2 236.0,335.8Z" fill="#6b3f2a" stroke="#111" stroke-width="2" stroke-linejoin="round"/><path d="M150.8,215.8 C150.5,216.9 148.7,220.6 149.2,222.3 C149.7,224.0 152.2,224.8 154.0,226.0 C155.8,227.2 157.3,227.2 160.0,229.4 C162.7,231.6 166.9,235.8 170.0,239.2 C173.1,242.6 175.8,246.4 178.3,250.0 C180.8,253.6 182.8,257.2 185.0,260.8 C187.2,264.4 189.5,267.9 191.7,271.7 C193.9,275.4 196.1,279.4 198.3,283.3 C200.5,287.2 202.8,291.1 205.0,295.0 C207.2,298.9 209.5,303.4 211.3,306.7 C213.1,310.0 213.6,310.3 216.0,315.0 C218.4,319.7 222.0,327.3 226.0,335.0 C230.0,342.7 234.3,351.0 240.0,361.0 C245.7,371.0 254.4,385.4 260.0,395.0 C265.6,404.6 269.0,410.5 273.6,418.5 C278.2,426.5 284.6,437.8 287.6,443.0 C290.6,448.2 290.9,448.8 291.6,450.0 L300.0,450.0 C299.3,448.8 299.0,448.2 296.0,443.0 C293.0,437.8 286.7,426.5 282.0,418.5 C277.3,410.5 273.5,404.6 268.0,395.0 C262.5,385.4 254.5,371.0 249.0,361.0 C243.5,351.0 239.0,342.7 235.0,335.0 C231.0,327.3 227.6,320.2 225.0,315.0 C222.4,309.8 221.0,307.1 219.3,304.0 C217.6,300.9 216.8,300.1 215.0,296.7 C213.2,293.2 210.5,287.8 208.3,283.3 C206.1,278.9 203.9,274.1 201.7,270.0 C199.5,265.9 197.5,262.4 195.0,258.5 C192.5,254.7 189.8,250.7 186.7,246.9 C183.6,243.2 180.0,239.2 176.7,236.0 C173.4,232.8 170.0,230.0 166.7,227.7 C163.4,225.4 158.8,223.4 156.8,222.0 C154.8,220.6 155.3,219.6 154.6,219.4 C153.9,219.2 153.2,221.2 152.6,220.6 C152.0,220.0 151.1,216.6 150.8,215.8Z" fill="#6b3f2a" stroke="#111" stroke-width="2" stroke-linejoin="round"/><path d="M48,213.6 L56,218.4" stroke="#1a1210" stroke-width="1"/><path d="M20.7,199.4 C22.2,200.0 26.8,201.6 30.0,203.0 C33.2,204.4 36.5,206.3 40.0,208.0 C43.5,209.7 49.2,212.1 50.7,213.3 C52.2,214.5 51.1,215.8 49.0,215.3 C46.9,214.9 41.7,212.3 38.0,210.6 C34.3,208.9 28.8,206.1 27.0,205.2Z" fill="#6b3f2a" stroke="#2a1a12" stroke-width="0.9" stroke-linejoin="round"/><path d="M98.3,220 L104.4,233" stroke="#2a1a12" stroke-width="1"/><path d="M103.2,230.4 C103.8,231.7 105.7,235.4 107.0,238.0 C108.3,240.6 109.6,242.9 110.8,246.0 C112.0,249.1 114.1,255.1 114.2,256.4 C114.3,257.6 112.3,255.2 111.3,253.5 C110.3,251.8 109.0,248.9 108.0,246.5 C107.0,244.1 105.5,240.2 105.0,239.0Z" fill="#6b3f2a" stroke="#2a1a12" stroke-width="0.9" stroke-linejoin="round"/><path d="M186.7,234.2 C187.1,235.3 188.3,237.8 189.0,241.0 C189.7,244.2 191.0,251.8 190.8,253.3 C190.6,254.8 188.8,251.7 188.0,250.0 C187.2,248.3 186.3,244.2 186.0,243.0Z" fill="#6b3f2a" stroke="#2a1a12" stroke-width="0.9" stroke-linejoin="round"/><path d="M186.0,278.7 C187.1,279.1 190.5,279.2 192.7,280.8 C194.9,282.4 197.3,285.4 199.3,288.0 C201.3,290.6 204.7,296.2 204.7,296.7 C204.7,297.2 201.2,293.1 199.3,291.0 C197.4,288.9 195.1,285.5 193.5,283.8 C191.9,282.1 190.2,281.1 189.5,280.6Z" fill="#6b3f2a" stroke="#2a1a12" stroke-width="0.9" stroke-linejoin="round"/><path d="M120.8,286.7 C121.7,287.2 124.2,288.8 126.0,289.5 C127.8,290.2 128.9,290.8 131.7,291.0 C134.5,291.2 139.1,291.0 143.0,291.0 C146.9,291.0 153.2,290.9 155.0,291.2 C156.8,291.5 156.2,292.5 154.0,292.8 C151.8,293.1 145.8,293.0 142.0,293.0 C138.2,293.0 133.8,293.1 131.0,292.8 C128.2,292.5 126.4,291.3 125.5,291.0Z" fill="#6b3f2a" stroke="#2a1a12" stroke-width="0.9" stroke-linejoin="round"/><path d="M358.7,277.5 L358.3,294" stroke="#2a1a12" stroke-width="1"/><path d="M358.4,291.0 C358.5,292.3 358.9,296.3 358.8,299.0 C358.7,301.7 358.3,304.7 357.8,307.0 C357.3,309.3 357.2,311.1 356.0,313.0 C354.8,314.9 351.3,318.5 350.6,318.2 C349.9,317.9 351.0,313.5 351.6,311.0 C352.2,308.5 353.4,305.5 354.2,303.0 C355.0,300.5 356.2,297.2 356.6,296.0Z" fill="#6b3f2a" stroke="#2a1a12" stroke-width="0.9" stroke-linejoin="round"/><path d="M392.0,306.7 C394.0,306.5 399.4,306.1 404.0,305.5 C408.6,304.9 414.5,304.2 419.3,303.3 C424.1,302.4 431.4,300.1 432.9,300.3 C434.3,300.5 430.3,303.3 428.0,304.5 C425.7,305.7 423.1,306.9 419.3,307.5 C415.5,308.1 407.4,307.9 405.0,308.0Z" fill="#6b3f2a" stroke="#2a1a12" stroke-width="0.9" stroke-linejoin="round"/><path d="M264.5,281.0 L265.4,297.0 L268.5,306.0 L272.5,313.0 L278.0,318.5 L283.2,320.3 L289.0,318.5 L293.8,313.0 L298.5,305.0 L301.8,297.0 L303.4,289.0 L303.6,281.0 L295.0,279.0 L283.0,277.5 L272.0,279.0Z" fill="#1a1a1a" stroke="#111" stroke-width="1.7" stroke-linejoin="round"/><path d="M268,305 L276,321 L290,321 L284,300Z" fill="#1a1a1a"/><path d="M275.5,301 L281,318 M284,301.5 L287.5,317 M292,298.5 L293,312 M296.5,292 L299,303" stroke="#000" stroke-width="1.1" fill="none"/><path d="M235.0,241.0 C235.7,240.0 237.3,237.0 239.0,235.0 C240.7,233.0 243.0,230.8 245.0,229.0 C247.0,227.2 248.8,225.8 251.0,224.5 C253.2,223.2 256.0,221.8 258.3,221.0 C260.6,220.2 262.8,219.9 265.0,219.8 C267.2,219.7 269.5,219.9 271.7,220.3 C273.9,220.7 276.2,221.5 278.0,222.3 C279.8,223.1 281.1,223.9 282.3,225.0 C283.5,226.1 283.9,226.3 285.0,229.0 C286.1,231.7 287.8,236.8 289.0,241.0 C290.2,245.2 291.8,251.0 292.3,254.3 C292.8,257.6 292.2,259.2 292.0,261.0 C291.8,262.8 292.0,263.8 291.0,265.0 C290.0,266.2 287.9,267.4 286.0,268.3 C284.1,269.2 282.4,269.6 279.7,270.3 C277.0,271.0 272.9,271.9 270.0,272.5 C267.1,273.1 263.5,271.7 262.3,274.0 C261.1,276.3 262.3,282.8 262.7,286.3 C263.1,289.8 263.8,292.1 264.5,295.0 C265.2,297.9 266.1,301.1 267.2,304.0 C268.3,306.9 269.5,309.8 271.0,312.5 C272.5,315.2 275.8,318.3 276.0,320.0 C276.2,321.7 274.3,322.3 272.5,322.7 C270.7,323.1 267.4,322.8 265.0,322.5 C262.6,322.2 260.6,321.9 258.3,321.0 C256.1,320.1 253.6,318.4 251.5,316.8 C249.4,315.2 247.7,313.2 245.9,311.2 C244.1,309.1 242.2,306.9 240.5,304.5 C238.8,302.1 237.2,299.5 236.0,297.0 C234.8,294.5 233.8,291.9 233.0,289.5 C232.2,287.1 231.8,285.2 231.4,282.8 C231.0,280.4 230.5,277.5 230.3,275.0 C230.1,272.5 230.2,270.0 230.3,267.7 C230.4,265.4 230.6,263.2 230.8,261.0 C231.0,258.8 231.3,256.6 231.7,254.3 C232.1,252.1 232.8,248.6 233.0,247.5Z" fill="#ed1c24" stroke="#111" stroke-width="1.7" stroke-linejoin="round"/><path d="M285.0,229.0 C285.9,229.0 288.7,227.7 290.3,229.0 C291.9,230.3 293.2,234.3 294.5,237.0 C295.8,239.7 297.3,242.8 298.3,245.0 C299.3,247.2 299.9,248.7 300.5,250.5 C301.1,252.3 301.3,253.3 301.7,255.7 C302.1,258.1 302.4,261.8 302.6,265.0 C302.8,268.2 302.9,272.2 303.0,275.0 C303.1,277.8 304.1,280.8 302.9,281.5 C301.7,282.2 297.9,279.9 295.6,279.4 C293.3,278.8 291.1,278.5 289.0,278.2 C286.9,277.9 285.1,277.6 283.2,277.6 C281.3,277.6 279.3,277.9 277.5,278.2 C275.7,278.5 274.7,278.8 272.5,279.4 C270.3,280.0 266.0,282.9 264.3,282.0 C262.6,281.1 261.4,275.6 262.3,274.0 C263.2,272.4 267.1,273.1 270.0,272.5 C272.9,271.9 277.0,271.0 279.7,270.3 C282.4,269.6 284.1,269.2 286.0,268.3 C287.9,267.4 290.0,266.2 291.0,265.0 C292.0,263.8 291.8,262.8 292.0,261.0 C292.2,259.2 292.8,257.6 292.3,254.3 C291.8,251.0 289.6,243.2 289.0,241.0Z" fill="#7f7f7f" stroke="#111" stroke-width="1.7" stroke-linejoin="round"/><path d="M217.0,209.7 C218.2,209.3 221.4,208.4 224.0,207.6 C226.6,206.8 230.5,205.9 232.3,205.0 C234.1,204.1 234.0,203.2 235.0,202.4 C236.0,201.6 236.8,200.9 238.3,200.3 C239.8,199.7 241.8,199.0 244.0,198.6 C246.2,198.2 249.3,197.9 251.7,197.7 C254.1,197.5 256.3,197.5 258.5,197.6 C260.7,197.7 262.8,197.9 265.0,198.3 C267.2,198.7 269.5,199.2 271.5,200.0 C273.5,200.8 275.3,201.7 277.0,203.0 C278.7,204.3 280.2,206.1 281.5,208.0 C282.8,209.9 283.9,212.1 285.0,214.3 C286.1,216.6 287.1,219.1 288.0,221.5 C288.9,223.9 290.6,227.7 290.3,229.0 C290.0,230.3 287.3,230.2 286.0,229.5 C284.7,228.8 283.6,226.2 282.3,225.0 C281.0,223.8 279.8,223.1 278.0,222.3 C276.2,221.5 273.9,220.7 271.7,220.3 C269.5,219.9 267.2,219.7 265.0,219.8 C262.8,219.9 260.6,220.2 258.3,221.0 C256.0,221.8 253.2,223.2 251.0,224.5 C248.8,225.8 247.0,227.2 245.0,229.0 C243.0,230.8 240.7,233.0 239.0,235.0 C237.3,237.0 235.6,241.0 235.0,241.0 C234.4,241.0 235.4,237.0 235.4,235.0 C235.4,233.0 235.3,231.0 235.0,229.0 C234.7,227.0 234.2,224.9 233.5,223.0 C232.8,221.1 232.6,219.1 231.0,217.7 C229.4,216.3 226.3,215.6 224.0,214.5 C221.7,213.4 218.2,211.6 217.0,211.0Z" fill="#1a1a1a" stroke="#111" stroke-width="1.7" stroke-linejoin="round"/><path d="M271.6,281.9 C272.3,281.6 274.4,280.8 276.0,280.3 C277.6,279.9 279.4,279.4 281.4,279.2 C283.4,279.0 285.8,279.2 288.0,279.4 C290.2,279.5 293.4,279.0 294.7,280.1 C296.0,281.2 295.7,284.1 296.0,286.0 C296.3,287.9 296.7,290.0 296.5,291.6 C296.3,293.2 295.4,294.4 294.6,295.6 C293.9,296.8 293.1,298.0 292.0,298.8 C290.9,299.6 289.5,300.2 288.0,300.6 C286.5,301.0 284.7,301.3 283.2,301.4 C281.7,301.5 280.3,301.3 279.0,301.2 C277.7,301.1 276.2,302.2 275.2,300.5 C274.2,298.8 273.4,292.6 273.0,291.0Z" fill="#fff" stroke="#111" stroke-width="1.2"/><path d="M282.3,279.2 L283.6,290 L285.8,301.4 M290.3,279.6 L291.2,289 L292.9,297.5" stroke="#222" stroke-width="1" fill="none"/><path d="M223.5,209.6 L232.3,206.6 L236.3,209 L235.6,211.6 L229,210.4Z" fill="#3ba49a"/><path d="M225,212.3 L229,211.4 L235.4,213.2 L233.7,217 L229,215Z" fill="#0f7a37"/><path d="M232.3,205 L217,209.7 L217,211 L231,217.7" fill="none" stroke="#111" stroke-width="1.4"/><ellipse cx="247.7" cy="208.4" rx="1.9" ry="3" fill="#ddd" stroke="#fff" stroke-width="1"/><ellipse cx="247.6" cy="208.8" rx="0.8" ry="1.6" fill="#888"/></g></svg>
<svg style="position:absolute;left:0px;top:0px;" width="1200" height="675" viewBox="0 0 1200 675"><rect x="524.40" y="282.80" width="4.2" height="3.8" rx=".6" fill="#fff" stroke="#66686c" stroke-width=".9"/><rect x="524.40" y="443.40" width="4.2" height="3.8" rx=".6" fill="#fff" stroke="#66686c" stroke-width=".9"/><rect x="262.30" y="443.40" width="4.2" height="3.8" rx=".6" fill="#fff" stroke="#66686c" stroke-width=".9"/></svg>
<div style="position:absolute;left:0px;top:617px;width:1200px;height:23px;background:#f0f0f0"></div>
<svg style="position:absolute;left:0px;top:0px;" width="1200" height="675" viewBox="0 0 1200 675"><rect x="0" y="617.3" width="1200" height="0.9" fill="#d6d6d6"/><rect x="0" y="616.8" width="1200" height="0.55" fill="#dfe6f2"/></svg>
<div style="position:absolute;left:136px;top:619px;width:1px;height:20px;background:#d7d7d7"></div>
<div style="position:absolute;left:274px;top:619px;width:1px;height:20px;background:#d7d7d7"></div>
<div style="position:absolute;left:411px;top:619px;width:1px;height:20px;background:#d7d7d7"></div>
<div style="position:absolute;left:547px;top:619px;width:1px;height:20px;background:#d7d7d7"></div>
<div style="position:absolute;left:1025px;top:619px;width:1px;height:20px;background:#d7d7d7"></div>
<span class="t" style="left:19.00px;top:625px;font-size:10.8px;color:#1e1e1e;transform:scaleX(0.9365);">1011, 203пкс</span>
<span class="t" style="left:295.00px;top:625px;font-size:10.8px;color:#1e1e1e;transform:scaleX(0.9514);">1184 × 720пкс</span>
<span class="t" style="left:432.00px;top:625px;font-size:10.8px;color:#1e1e1e;transform:scaleX(0.9206);">Размер: 25,8КБ</span>
<span class="t" style="left:1050.00px;top:625px;font-size:10.8px;color:#1e1e1e;transform:scaleX(0.9070);">50%</span>
<svg style="position:absolute;left:0px;top:0px;" width="1200" height="675" viewBox="0 0 1200 675"><path d="M8,624.6 V633.6 M3.5,629.1 H12.5" stroke="#2a4364" stroke-width="1.1"/><path d="M8,623.6 L9.6,625.6 H6.4Z M8,634.6 L9.6,632.6 H6.4Z M2.5,629.1 L4.5,627.5 V630.7Z M13.5,629.1 L11.5,627.5 V630.7Z" fill="#2a4364"/><rect x="145.7" y="624.6" width="6.8" height="5.8" fill="none" stroke="#263e60" stroke-width="1.05" stroke-dasharray="2.2 1.2" stroke-dashoffset="1.1"/><path d="M142.5,625 V630.8 M145.2,633.4 H151.6" stroke="#263e60" stroke-width="1.1"/><path d="M142.5,623.9 l1.5,2 h-3Z M153.2,633.4 l-2,1.5 v-3Z" fill="#263e60"/><rect x="282.6" y="624.8" width="7" height="5.8" fill="none" stroke="#263e60" stroke-width="1.15"/><path d="M279.6,625 V630.8 M282.2,633.4 H288.6" stroke="#263e60" stroke-width="1.1"/><path d="M279.6,623.9 l1.5,2 h-3Z M290.2,633.4 l-2,1.5 v-3Z" fill="#263e60"/><rect x="417.6" y="624.4" width="9" height="9" fill="#f0f0f0" stroke="#35506e" stroke-width="1.1"/><rect x="419.6" y="624.6" width="5" height="3" fill="none" stroke="#35506e" stroke-width=".9"/><rect x="419.8" y="630.2" width="4.6" height="3.2" fill="#35506e"/><rect x="421" y="630.9" width="1.3" height="2.2" fill="#f0f0f0"/><circle cx="1082.2" cy="629.3" r="6.6" fill="#f4f4f4" stroke="#8a8a8a" stroke-width="1"/><path d="M1079,629.3 H1085.4" stroke="#444" stroke-width="1.3"/><circle cx="1189.2" cy="629.3" r="6.6" fill="#f4f4f4" stroke="#8a8a8a" stroke-width="1"/><path d="M1186,629.3 H1192.4 M1189.2,626.1 V632.5" stroke="#444" stroke-width="1.3"/><rect x="1098" y="627.6" width="74.4" height="2.4" fill="#e2e2e2" stroke="#d0d0d0" stroke-width=".5"/><path d="M1112.4,621.4 H1120.8 V632.4 L1116.6,636.2 L1112.4,632.4Z" fill="#0c7bdc"/></svg>
<div style="position:absolute;left:0px;top:640px;width:1200px;height:35px;background:#070b13"></div>
<div style="position:absolute;left:387px;top:640px;width:41.5px;height:35px;background:#3a3e45"></div>
<div style="position:absolute;left:175px;top:673px;width:35px;height:2px;background:#76b9ed"></div>
<div style="position:absolute;left:304px;top:673px;width:35px;height:2px;background:#76b9ed"></div>
<div style="position:absolute;left:347px;top:673px;width:35px;height:2px;background:#76b9ed"></div>
<div style="position:absolute;left:387px;top:673px;width:41.5px;height:2px;background:#76b9ed"></div>
<svg style="position:absolute;left:0px;top:0px;" width="1200" height="675" viewBox="0 0 1200 675"><rect x="1195.4" y="640.4" width="1.3" height="34.6" fill="#30343a"/><path d="M13.4,652.6 L19.4,651.7 V657.2 H13.4Z M20.3,651.6 L28.2,650.4 V657.2 H20.3Z M13.4,658.1 H19.4 V663.7 L13.4,662.8Z M20.3,658.1 H28.2 V665 L20.3,663.8Z" fill="#fff"/><circle cx="66" cy="655.2" r="4.6" fill="none" stroke="#fff" stroke-width="1.3"/><path d="M62.6,658.6 L56.6,664.6" stroke="#fff" stroke-width="1.4"/><rect x="100.2" y="652" width="10.8" height="11.2" fill="none" stroke="#fff" stroke-width="1.2"/><path d="M98.2,653.8 H96.8 V661.4 H98.2 M113,653.8 H114.4 V661.4 H113" fill="none" stroke="#fff" stroke-width="1.1"/><path d="M139.6,653.4 L157.4,651.8 L157.8,667 L139.6,664.4Z" fill="#fff"/><path d="M144.6,653 C144.6,648.6 152,647.6 152,652.2" fill="none" stroke="#fff" stroke-width="1.2"/><path d="M143.6,655.6 L147.8,655.3 V659 H143.6Z M148.8,655.2 L153.6,654.8 V659 H148.8Z M143.6,660 H147.8 V663.6 L143.6,663.1Z M148.8,660 H153.6 V664.4 L148.8,663.8Z" fill="#070b13"/><path d="M184,657.6 C184.4,651.6 189,648.2 193.6,648.6 C198.6,649 201.6,652.8 201.4,658.6 L190.4,658.6 C190.6,661.4 193,663 196,662.8 C198,662.7 199.6,662.2 201,661.4 L201,664.8 C199.2,665.8 197,666.3 194.6,666.2 C189.6,666 186.4,662.6 186.6,658 C186.8,655 188.6,652.8 191.2,651.8 C187.8,652.4 185.4,654.6 184,657.6Z M190.6,656 L196.8,656 C196.8,653.6 195.4,652.4 193.6,652.4 C192,652.4 190.8,653.8 190.6,656Z" fill="#1e8ae6" fill-rule="evenodd"/><path d="M231.4,647.4 L244.4,652.4 L240.6,662.6 L227.6,657.6Z" fill="#4f9fe6"/><path d="M232.4,649 L243,653 L241.6,656.6 L231,652.6Z" fill="#8cc6f5"/><path d="M225.2,652.2 L238.6,650.4 L240.2,662.2 L226.8,664Z" fill="#e8eef2"/><path d="M226,652.9 L237.9,651.3 L238.6,656.4 L226.7,658Z" fill="#69b2ec"/><path d="M226.7,658 L238.6,656.4 L239.3,661.4 L227.4,663Z" fill="#7c9a4e"/><path d="M229,657.7 L232.4,655 L235,656.9 L238.6,656.4 L226.7,658Z" fill="#b9c27a"/><rect x="237.2" y="659" width="8.8" height="8" fill="#eceef0"/><path d="M238.4,661.6h6.4M238.4,663.4h6.4M238.4,665.2h6.4" stroke="#a9aeb4" stroke-width=".8"/><path d="M243.2,660.2v6" stroke="#d86a5a" stroke-width="1.2"/><rect x="269" y="650.2" width="17.2" height="15.6" rx=".8" fill="#5f9ccb"/><rect x="270" y="651.2" width="13.6" height="13.6" fill="#86b9df"/><rect x="283.8" y="651" width="2.4" height="14" fill="#4a86b6"/><circle cx="276.75" cy="658" r="5.6" fill="#f58220"/><circle cx="276.75" cy="658" r="5.6" fill="none" stroke="#f9a85a" stroke-width=".6"/><path d="M274.9,654.9 L280.3,658 L274.9,661.1Z" fill="#fff"/><path d="M312,649.6 H318.2 L319.8,651.4 H330.8 V664.7 H312Z" fill="#f2c95c"/><rect x="312" y="652.6" width="18.8" height="12.1" fill="#f8dc83"/><path d="M315.8,658 H327 V664.7 H323.4 V661.2 H319.4 V664.7 H315.8Z" fill="#29a9ea"/><rect x="314" y="650.4" width="3" height=".9" fill="#8bd07a"/><path d="M355.4,650 L372.8,647.4 L373.6,665.8 L356.4,664Z" fill="#f4f7fb"/><path d="M354,651.2 C356,649.6 358.4,648.8 360.6,648.8 L360.6,664.4 C358.4,664.2 356,663.6 354.4,662.4 C353.6,658.6 353.6,655 354,651.2Z" fill="#2f62b0"/><path d="M362.6,652.2 l1.2,4.6 l1.5,-4.4 l1.5,4.4 l1.2,-4.6" fill="none" stroke="#2a5699" stroke-width="1.2"/><path d="M369,652.4h3.2M369,654.4h3.2M369,656.4h3.2" stroke="#5b86c8" stroke-width=".7"/><path d="M361.4,658.8h10.8M361.4,660.8h10.8M361.4,662.8h10.8" stroke="#3b6cb8" stroke-width=".9"/><path d="M400.6,650.2 H410.6 L414,653.6 V666 H400.6Z" fill="#f4f4f4"/><path d="M410.6,650.2 V653.6 H414Z" fill="#c9c9c9"/><path d="M998.2,659.2 L1003.4,654.2 L1008.6,659.2" fill="none" stroke="#fff" stroke-width="1.3"/><rect x="1017.6" y="651.4" width="10.6" height="10.6" rx="3" fill="#fff"/><rect x="1019" y="652.8" width="7.8" height="7.8" rx="2.2" fill="#169a9c"/><path d="M1021,656.9 h3.6 a1.8,1.8 0 1 0 -1,1.9" fill="none" stroke="#fff" stroke-width="1"/><circle cx="1027.6" cy="661" r="3.3" fill="#f0a020"/><rect x="1027.2" y="658.8" width=".9" height="2.8" fill="#fff"/><rect x="1027.2" y="662.2" width=".9" height=".9" fill="#fff"/><path d="M1041.6,663.4 A11,11 0 0 1 1052.6,652.4 M1044.2,663.4 A8.4,8.4 0 0 1 1052.6,655 M1046.8,663.4 A5.8,5.8 0 0 1 1052.6,657.6 M1049.4,663.4 A3.2,3.2 0 0 1 1052.6,660.2" fill="none" stroke="#fff" stroke-width="1.1"/><rect x="1050.6" y="661.4" width="2.2" height="2.2" fill="#fff"/><path d="M1059.2,655.8 H1061.4 L1064.6,652.8 V663.2 L1061.4,660.2 H1059.2Z" fill="none" stroke="#fff" stroke-width="1"/><path d="M1066.6,655.4 A3.6,3.6 0 0 1 1066.6,660.6" fill="none" stroke="#d0d0d0" stroke-width=".9"/><path d="M1068.6,653.4 A6.4,6.4 0 0 1 1068.6,662.6" fill="none" stroke="#8a8d92" stroke-width=".9"/><path d="M1070.8,651.6 A9,9 0 0 1 1070.8,664.4" fill="none" stroke="#5a5d62" stroke-width=".9"/><path d="M1080.2,650.6 H1094.2 V661.4 H1089.4 L1087.2,663.8 L1085,661.4 H1080.2Z" fill="#fff"/><path d="M1082.6,653.6h9.2M1082.6,656h9.2M1082.6,658.4h6" stroke="#070b13" stroke-width="1"/></svg>
<span class="t" style="left:1105.00px;top:653px;font-size:10.6px;color:#fff;transform:scaleX(0.8941);">РУС</span>
<span class="t" style="left:1151.40px;top:645px;font-size:10.6px;color:#fff;transform:scaleX(0.8714);">16:45</span>
<span class="t" style="left:1138.80px;top:660px;font-size:10.6px;color:#fff;transform:scaleX(0.9012);">11.07.2016</span>
</body></html>
